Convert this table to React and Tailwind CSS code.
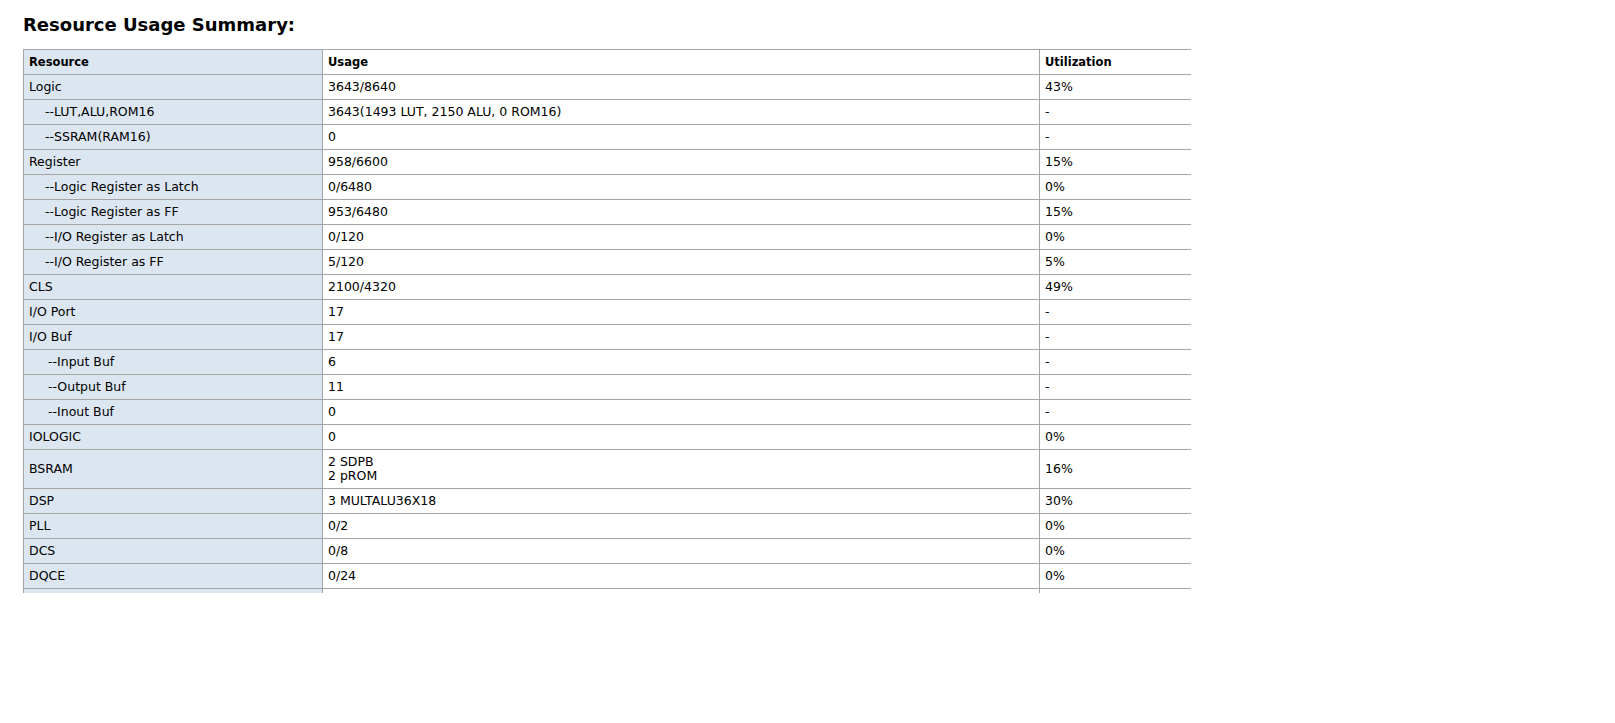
import React from "react";

const rows = [
  { name: "Logic", usage: "3643/8640", util: "43%" },
  { name: "--LUT,ALU,ROM16", usage: "3643(1493 LUT, 2150 ALU, 0 ROM16)", util: "-", indent: 1 },
  { name: "--SSRAM(RAM16)", usage: "0", util: "-", indent: 1 },
  { name: "Register", usage: "958/6600", util: "15%" },
  { name: "--Logic Register as Latch", usage: "0/6480", util: "0%", indent: 1 },
  { name: "--Logic Register as FF", usage: "953/6480", util: "15%", indent: 1 },
  { name: "--I/O Register as Latch", usage: "0/120", util: "0%", indent: 1 },
  { name: "--I/O Register as FF", usage: "5/120", util: "5%", indent: 1 },
  { name: "CLS", usage: "2100/4320", util: "49%" },
  { name: "I/O Port", usage: "17", util: "-" },
  { name: "I/O Buf", usage: "17", util: "-" },
  { name: "--Input Buf", usage: "6", util: "-", indent: 2 },
  { name: "--Output Buf", usage: "11", util: "-", indent: 2 },
  { name: "--Inout Buf", usage: "0", util: "-", indent: 2 },
  { name: "IOLOGIC", usage: "0", util: "0%" },
  { name: "BSRAM", usage: ["2 SDPB", "2 pROM"], util: "16%" },
  { name: "DSP", usage: "3 MULTALU36X18", util: "30%" },
  { name: "PLL", usage: "0/2", util: "0%" },
  { name: "DCS", usage: "0/8", util: "0%" },
  { name: "DQCE", usage: "0/24", util: "0%" },
];

const App = () => {
  return (
    <div className="min-h-screen bg-white pt-[14px] pl-[23px] font-['DejaVu_Sans',sans-serif] text-black">
      <h2 className="text-[18px] leading-[22px] font-bold">Resource Usage Summary:</h2>

      <div className="mt-[13px] w-[1168px] h-[544px] overflow-hidden">
        <table className="table-fixed w-[1400px] border-separate border-spacing-0 text-[12.5px] leading-[14px]">
          <colgroup>
            <col className="w-[300px]" />
            <col className="w-[717px]" />
            <col className="w-[383px]" />
          </colgroup>
          <thead>
            <tr className="text-left text-[11.5px] font-bold">
              <th className="bg-[#dce6f1] border-t border-l border-r border-b border-[#a5a5a5] px-[5px] py-[5px]">
                Resource
              </th>
              <th className="border-t border-r border-b border-[#a5a5a5] px-[5px] py-[5px]">Usage</th>
              <th className="border-t border-b border-[#a5a5a5] px-[5px] py-[5px]">Utilization</th>
            </tr>
          </thead>
          <tbody>
            {rows.map((r) => (
              <tr key={r.name}>
                <td
                  className={`bg-[#dce6f1] border-l border-r border-b border-[#a5a5a5] py-[5px] pr-[5px] ${
                    r.indent === 1 ? "pl-[21px]" : r.indent === 2 ? "pl-[24px]" : "pl-[5px]"
                  }`}
                >
                  {r.name}
                </td>
                <td className="border-r border-b border-[#a5a5a5] px-[5px] py-[5px]">
                  {Array.isArray(r.usage)
                    ? r.usage.map((u) => <div key={u}>{u}</div>)
                    : r.usage}
                </td>
                <td className="border-b border-[#a5a5a5] px-[5px] py-[5px]">{r.util}</td>
              </tr>
            ))}
            <tr>
              <td className="h-[25px] bg-[#dce6f1] border-l border-r border-b border-[#a5a5a5]"></td>
              <td className="h-[25px] border-r border-b border-[#a5a5a5]"></td>
              <td className="h-[25px] border-b border-[#a5a5a5]"></td>
            </tr>
          </tbody>
        </table>
      </div>
    </div>
  );
};

export default App;
